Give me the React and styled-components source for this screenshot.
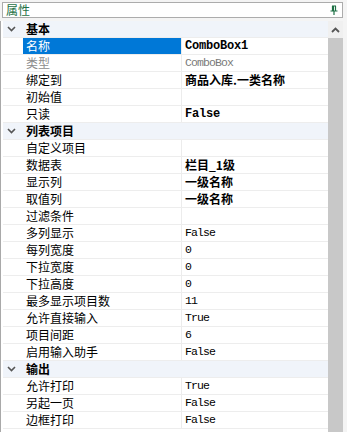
import React from "react";
import styled, { createGlobalStyle } from "styled-components";

const Global = createGlobalStyle`
  html, body { margin: 0; padding: 0; background: #f4f4f4; }
  body { width: 347px; height: 432px; overflow: hidden; font-family: "Noto Sans CJK SC", sans-serif; }
`;

const Frame = styled.div`
  width: 347px;
  height: 432px;
  display: flex;
  flex-direction: column;
  box-sizing: border-box;
`;

const TitleBar = styled.div`
  padding: 2px 4px 3px 2px;
  height: 21px;
  box-sizing: border-box;
`;

const TitleBox = styled.div`
  height: 16px;
  box-sizing: border-box;
  border: 1px solid #acacac;
  background: #fff;
  display: flex;
  align-items: center;
  justify-content: space-between;
  padding: 0 4px 0 3px;
  color: #1e7145;
  font-size: 12px;
  line-height: 14px;
`;

const Body = styled.div`
  flex: 1;
  display: flex;
  border-left: 1px solid #a9a9a9;
  margin-right: 4px;
  background: #fff;
  overflow: hidden;
`;

const Grid = styled.div`
  flex: 1;
  display: flex;
  flex-direction: column;
  padding-left: 2px;
`;

const Row = styled.div`
  display: grid;
  grid-template-columns: 20px 158px 1fr;
  height: 17px;
  box-sizing: border-box;
  border-bottom: 1px solid #ededed;
  background: ${(p) => (p.$cat ? "#f0f4fa" : "#fff")};
`;

const Gutter = styled.div`
  display: flex;
  align-items: center;
  justify-content: center;
  padding-right: 3px;
`;

const Name = styled.div`
  font-size: 12px;
  line-height: 16px;
  padding-left: 3px;
  white-space: nowrap;
  color: ${(p) => (p.$sel ? "#fff" : p.$dim ? "#8c8c8c" : "#000")};
  background: ${(p) => (p.$sel ? "#0078d7" : "transparent")};
  font-weight: ${(p) => (p.$cat ? 700 : 400)};
`;

const Value = styled.div`
  border-left: ${(p) => (p.$cat ? "none" : "1px solid #ececec")};
  padding-left: 3px;
  font-size: ${(p) => (p.$cjk ? "12px" : p.$bold ? "12px" : "11.5px")};
  line-height: 16px;
  white-space: nowrap;
  overflow: hidden;
  font-family: ${(p) => (p.$cjk ? '"Noto Sans CJK SC", sans-serif' : '"Liberation Mono", monospace')};
  font-weight: ${(p) => (p.$bold ? 700 : 400)};
  letter-spacing: ${(p) => (p.$cjk ? "0" : p.$bold ? "-0.2px" : "-0.9px")};
  color: ${(p) => (p.$dim ? "#7a7a7a" : "#000")};
`;

const Scroll = styled.div`
  width: 15px;
  display: flex;
  flex-direction: column;
  background: #f0f0f0;
`;

const ArrowBtn = styled.div`
  height: 17px;
  display: flex;
  align-items: center;
  justify-content: center;
  background: #f0f0f0;
`;

const Thumb = styled.div`
  flex: 1;
  background: #c8c8c8;
`;

const Chevron = () => (
  <svg width="9" height="6" viewBox="0 0 9 6">
    <path d="M1 1 L4.5 4.5 L8 1" fill="none" stroke="#555" strokeWidth="1.6" />
  </svg>
);

const UpArrow = () => (
  <svg width="9" height="6" viewBox="0 0 9 6">
    <path d="M1 5 L4.5 1.5 L8 5" fill="none" stroke="#555" strokeWidth="1.8" />
  </svg>
);

const Pin = () => (
  <svg width="8" height="10" viewBox="0 0 8 10">
    <path d="M2 1 H6 M2.5 1 V6 M5.5 1 V6 M0.5 6 H7.5 M4 6 V10" fill="none" stroke="#1e7145" strokeWidth="1.2" />
    <rect x="2" y="1" width="2" height="5" fill="#1e7145" />
  </svg>
);

const rows = [
  { cat: "基本" },
  { name: "名称", value: "ComboBox1", bold: true, sel: true },
  { name: "类型", value: "ComboBox", dimName: true, dim: true },
  { name: "绑定到", value: "商品入库.一类名称", bold: true, cjk: true },
  { name: "初始值", value: "" },
  { name: "只读", value: "False", bold: true },
  { cat: "列表项目" },
  { name: "自定义项目", value: "" },
  { name: "数据表", value: "栏目_1级", bold: true, cjk: true },
  { name: "显示列", value: "一级名称", bold: true, cjk: true },
  { name: "取值列", value: "一级名称", bold: true, cjk: true },
  { name: "过滤条件", value: "" },
  { name: "多列显示", value: "False" },
  { name: "每列宽度", value: "0" },
  { name: "下拉宽度", value: "0" },
  { name: "下拉高度", value: "0" },
  { name: "最多显示项目数", value: "11" },
  { name: "允许直接输入", value: "True" },
  { name: "项目间距", value: "6" },
  { name: "启用输入助手", value: "False" },
  { cat: "输出" },
  { name: "允许打印", value: "True" },
  { name: "另起一页", value: "False" },
  { name: "边框打印", value: "False" },
];

export default function App() {
  return (
    <Frame>
      <Global />
      <TitleBar>
        <TitleBox>
          <span>属性</span>
          <Pin />
        </TitleBox>
      </TitleBar>
      <Body>
        <Grid>
          {rows.map((r, i) =>
            r.cat ? (
              <Row key={i} $cat>
                <Gutter>
                  <Chevron />
                </Gutter>
                <Name $cat>{r.cat}</Name>
                <Value $cat />
              </Row>
            ) : (
              <Row key={i}>
                <Gutter />
                <Name $sel={r.sel} $dim={r.dimName}>{r.name}</Name>
                <Value $bold={r.bold} $cjk={r.cjk} $dim={r.dim}>{r.value}</Value>
              </Row>
            )
          )}
        </Grid>
        <Scroll>
          <ArrowBtn>
            <UpArrow />
          </ArrowBtn>
          <Thumb />
        </Scroll>
      </Body>
    </Frame>
  );
}
